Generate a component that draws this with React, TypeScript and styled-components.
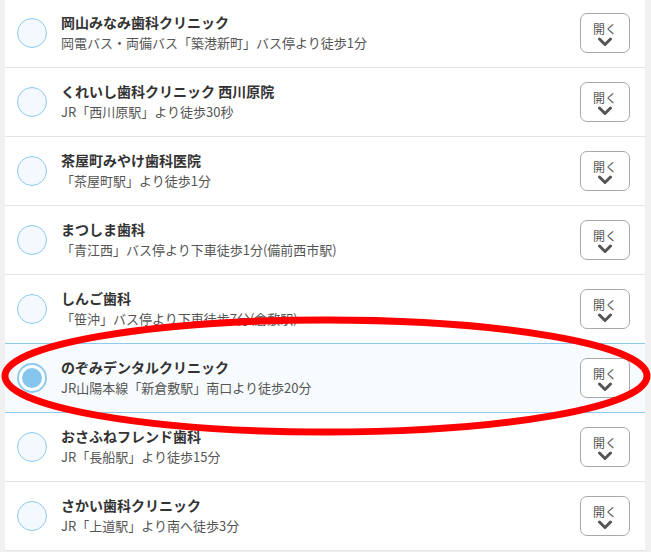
import React from 'react';
import styled, { createGlobalStyle } from 'styled-components';

const Global = createGlobalStyle`
  html, body {
    margin: 0;
    padding: 0;
    background: #f1f1f1;
    overflow: hidden;
  }
  body {
    font-family: 'Noto Sans CJK JP', 'Noto Sans', sans-serif;
  }
`;

const Page = styled.div`
  position: relative;
  width: 651px;
  height: 552px;
  overflow: hidden;
`;

const List = styled.ul`
  list-style: none;
  margin: -1px 6px 0 5px;
  padding: 0;
  background: #fff;
`;

const Row = styled.li<{ $active?: boolean }>`
  display: flex;
  align-items: center;
  height: 68px;
  box-sizing: content-box;
  padding: 0 15px 0 12px;
  border-bottom: 1px solid ${p => (p.$active ? '#8ccaee' : '#e4e4e4')};
  ${p => p.$active && `
    margin-top: -1px;
    border-top: 1px solid #8ccaee;
    background: #f7fbfe;
  `}
`;

const Radio = styled.span<{ $checked?: boolean }>`
  flex: none;
  width: 30px;
  height: 30px;
  box-sizing: border-box;
  border-radius: 50%;
  border: ${p => (p.$checked ? '2px' : '1px')} solid #8ccaee;
  background: ${p => (p.$checked ? '#fff' : '#f3f9fe')};
  display: flex;
  align-items: center;
  justify-content: center;

  &::after {
    content: '';
    display: ${p => (p.$checked ? 'block' : 'none')};
    width: 20px;
    height: 20px;
    border-radius: 50%;
    background: #85c6ef;
  }
`;

const Info = styled.div`
  flex: 1;
  margin-left: 14px;
  display: flex;
  flex-direction: column;
  gap: 2px;
  margin-top: -2px;
`;

const Name = styled.div`
  font-size: 14px;
  font-weight: bold;
  color: #333;
  line-height: 20px;
`;

const Access = styled.div`
  font-size: 13px;
  color: #555;
  line-height: 18px;
`;

const OpenButton = styled.button`
  flex: none;
  width: 50px;
  height: 40px;
  box-sizing: border-box;
  border: 1px solid #a9a9a9;
  border-radius: 7px;
  background: #fff;
  padding: 7px 0 0;
  display: flex;
  flex-direction: column;
  align-items: center;
  font-family: inherit;
  font-size: 12px;
  line-height: 15px;
  color: #555;

  svg {
    margin-top: 1px;
  }
`;

const Mark = styled.svg`
  position: absolute;
  left: 0;
  top: 0;
  pointer-events: none;
`;

const clinics = [
  { name: '岡山みなみ歯科クリニック', access: '岡電バス・両備バス「築港新町」バス停より徒歩1分' },
  { name: 'くれいし歯科クリニック 西川原院', access: 'JR「西川原駅」より徒歩30秒' },
  { name: '茶屋町みやけ歯科医院', access: '「茶屋町駅」より徒歩1分' },
  { name: 'まつしま歯科', access: '「青江西」バス停より下車徒歩1分(備前西市駅)' },
  { name: 'しんご歯科', access: '「笹沖」バス停より下車徒歩7分(倉敷駅)' },
  { name: 'のぞみデンタルクリニック', access: 'JR山陽本線「新倉敷駅」南口より徒歩20分', active: true },
  { name: 'おさふねフレンド歯科', access: 'JR「長船駅」より徒歩15分' },
  { name: 'さかい歯科クリニック', access: 'JR「上道駅」より南へ徒歩3分' },
];

function Chevron() {
  return (
    <svg width="16" height="10" viewBox="0 0 16 10">
      <path d="M2.5 2 L8 7.5 L13.5 2" fill="none" stroke="#555" strokeWidth="3" strokeLinecap="round" strokeLinejoin="round" />
    </svg>
  );
}

export default function App() {
  return (
    <Page>
      <Global />
      <List>
        {clinics.map(c => (
          <Row key={c.name} $active={c.active}>
            <Radio $checked={c.active} />
            <Info>
              <Name>{c.name}</Name>
              <Access>{c.access}</Access>
            </Info>
            <OpenButton>
              開く
              <Chevron />
            </OpenButton>
          </Row>
        ))}
      </List>
      <Mark width="651" height="552">
        <ellipse cx="326" cy="376" rx="321" ry="56" fill="none" stroke="#f00" strokeWidth="7" />
      </Mark>
    </Page>
  );
}
